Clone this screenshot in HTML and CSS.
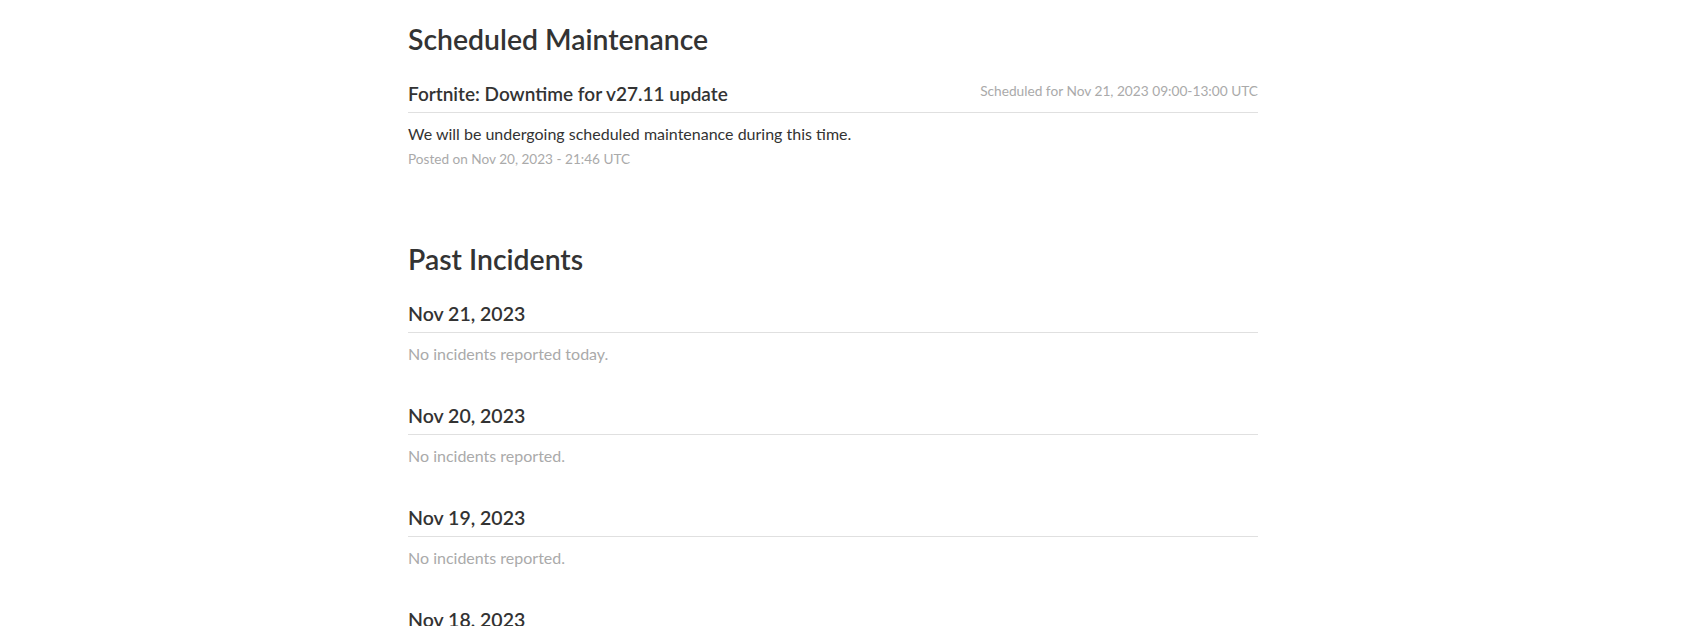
FILE: index.html
```html
<!DOCTYPE html>
<html lang="en">
<head>
<meta charset="utf-8">
<title>Status</title>
<link rel="stylesheet" href="styles.css">
</head>
<body>
<div class="container">
  <section class="scheduled">
    <h2 class="section-title">Scheduled Maintenance</h2>
    <div class="incident">
      <div class="incident-head">
        <span class="incident-title">Fortnite: Downtime for v27.11 update</span>
        <span class="incident-meta">Scheduled for Nov 21, 2023 09:00-13:00 UTC</span>
      </div>
      <p class="incident-body">We will be undergoing scheduled maintenance during this time.</p>
      <p class="incident-posted">Posted on Nov 20, 2023 - 21:46 UTC</p>
    </div>
  </section>
  <section class="past">
    <h2 class="section-title">Past Incidents</h2>
    <div class="day">
      <div class="day-head">Nov 21, 2023</div>
      <p class="day-empty">No incidents reported today.</p>
    </div>
    <div class="day">
      <div class="day-head">Nov 20, 2023</div>
      <p class="day-empty">No incidents reported.</p>
    </div>
    <div class="day">
      <div class="day-head">Nov 19, 2023</div>
      <p class="day-empty">No incidents reported.</p>
    </div>
    <div class="day">
      <div class="day-head">Nov 18, 2023</div>
      <p class="day-empty">No incidents reported.</p>
    </div>
  </section>
</div>
</body>
</html>
```
FILE: styles.css
```css
html, body {
  margin: 0;
  padding: 0;
  background: #ffffff;
}
body {
  font-family: Lato, "Liberation Sans", sans-serif;
  color: #333333;
  overflow: hidden;
}
.container {
  width: 850px;
  margin-left: 408px;
  padding-top: 21px;
}
.section-title {
  margin: 0;
  font-size: 28.4px;
  line-height: 36px;
  font-weight: 600;
  color: #333333;
}
.incident {
  margin-top: 25px;
}
.incident-head {
  display: flex;
  justify-content: space-between;
  align-items: flex-start;
  padding-bottom: 6px;
  border-bottom: 1px solid #e0e0e0;
}
.incident-title {
  font-size: 19px;
  line-height: 24px;
  font-weight: 600;
}
.incident-meta {
  font-size: 13.7px;
  line-height: 18px;
  color: #aaaaaa;
}
.incident-body {
  margin: 10px 0 0;
  font-size: 16px;
  line-height: 22px;
}
.incident-posted {
  margin: 4px 0 0;
  font-size: 13.6px;
  line-height: 20px;
  color: #aaaaaa;
}
.past {
  margin-top: 72px;
}
.day {
  margin-top: 25px;
  margin-bottom: 39px;
}
.day + .day {
  margin-top: 0;
}
.day-head {
  font-size: 19.5px;
  line-height: 24px;
  font-weight: 600;
  padding-bottom: 6px;
  border-bottom: 1px solid #e0e0e0;
}
.day-empty {
  margin: 10px 0 0;
  font-size: 16px;
  line-height: 22px;
  color: #aaaaaa;
}
```
